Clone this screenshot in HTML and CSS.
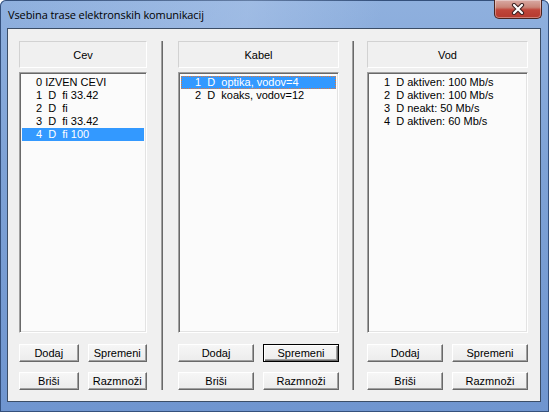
FILE: index.html
```html
<!DOCTYPE html>
<html lang="sl">
<head>
  <meta charset="UTF-8" />
  <title>Vsebina trase elektronskih komunikacij</title>
  <link rel="stylesheet" href="styles.css">
</head>
<body>

  <div class="okno">

    <!-- Naslovna vrstica -->
    <div class="naslov">
      <span class="naslov-tekst">Vsebina trase elektronskih komunikacij</span>
      <div class="zapri">
        <svg width="16" height="12" viewBox="0 0 16 12">
          <path d="M4 2 L12 10 M12 2 L4 10" stroke="#3a2020" stroke-width="4.2" stroke-linecap="round" fill="none"/>
          <path d="M4 2 L12 10 M12 2 L4 10" stroke="#fff" stroke-width="2.2" stroke-linecap="round" fill="none"/>
        </svg>
      </div>
    </div>

    <div class="vsebina">

      <!-- Cev -->
      <div class="stolpec ozek">
        <div class="glava">Cev</div>
        <div class="seznam">
          <div class="vrstica">0 IZVEN CEVI</div>
          <div class="vrstica">1  D  fi 33.42</div>
          <div class="vrstica">2  D  fi</div>
          <div class="vrstica">3  D  fi 33.42</div>
          <div class="vrstica izbrana">4  D  fi 100</div>
        </div>
        <div class="gumbi">
          <button class="gumb">Dodaj</button>
          <button class="gumb">Spremeni</button>
          <button class="gumb">Briši</button>
          <button class="gumb">Razmnoži</button>
        </div>
      </div>

      <div class="locilo"></div>

      <!-- Kabel -->
      <div class="stolpec">
        <div class="glava">Kabel</div>
        <div class="seznam">
          <div class="vrstica izbrana fokus">1  D  optika, vodov=4</div>
          <div class="vrstica">2  D  koaks, vodov=12</div>
        </div>
        <div class="gumbi">
          <button class="gumb">Dodaj</button>
          <button class="gumb privzet">Spremeni</button>
          <button class="gumb">Briši</button>
          <button class="gumb">Razmnoži</button>
        </div>
      </div>

      <div class="locilo"></div>

      <!-- Vod -->
      <div class="stolpec">
        <div class="glava">Vod</div>
        <div class="seznam">
          <div class="vrstica">1  D aktiven: 100 Mb/s</div>
          <div class="vrstica">2  D aktiven: 100 Mb/s</div>
          <div class="vrstica">3  D neakt: 50 Mb/s</div>
          <div class="vrstica">4  D aktiven: 60 Mb/s</div>
        </div>
        <div class="gumbi">
          <button class="gumb">Dodaj</button>
          <button class="gumb">Spremeni</button>
          <button class="gumb">Briši</button>
          <button class="gumb">Razmnoži</button>
        </div>
      </div>

    </div>
  </div>

</body>
</html>
```

FILE: styles.css
```css
body {
  margin: 0;
  padding: 0;
  background: #ffffff;
}

.okno {
  width: 549px;
  height: 412px;
  box-sizing: border-box;
  padding: 0 8px 10px 7px;
  border-radius: 6px 6px 0 0;
  background: linear-gradient(to bottom, #8fb0de 0%, #7ea2d6 40%, #6f95cf 100%);
  box-shadow: inset 0 0 0 1px #34507c;
}

.naslov {
  position: relative;
  height: 28px;
  display: flex;
  align-items: center;
  background: linear-gradient(100deg, rgba(255,255,255,0) 0%, rgba(190,210,240,0.35) 45%, rgba(255,255,255,0) 70%);
}

.naslov-tekst {
  position: relative;
  margin-left: 1px;
  margin-top: 1px;
  font-family: "Open Sans", "Noto Sans", sans-serif;
  font-size: 11px;
  letter-spacing: -0.1px;
  color: #000;
}

.naslov-tekst::before {
  content: "";
  position: absolute;
  left: -6px;
  right: -10px;
  top: -2px;
  bottom: -2px;
  border-radius: 10px;
  background: rgba(235, 242, 252, 0.75);
  filter: blur(6px);
  z-index: -1;
}

.zapri {
  position: absolute;
  right: -1px;
  top: 0;
  width: 48px;
  height: 19px;
  box-sizing: border-box;
  border: 1px solid #4a2420;
  border-top: none;
  border-radius: 0 0 5px 5px;
  background: linear-gradient(to bottom, #d9aaa4 0%, #c98578 40%, #c0453a 55%, #b53a2e 100%);
  box-shadow: inset 0 0 0 1px rgba(255,255,255,0.35);
  display: flex;
  align-items: center;
  justify-content: center;
}

.vsebina {
  height: 374px;
  box-sizing: border-box;
  border: 1px solid #3b4d66;
  background: #f0f0f0;
  display: flex;
  padding: 12px 12px 11px 11px;
}

.stolpec {
  width: 161px;
  display: flex;
  flex-direction: column;
}

.stolpec.ozek {
  width: 128px;
}

.locilo {
  width: 1px;
  border-left: 1px solid #a0a0a0;
  background: #696969;
  margin: 0 13px;
}

.ozek + .locilo {
  margin: 0 15px 0 14px;
}

.glava {
  height: 27px;
  box-sizing: border-box;
  border: 1px solid;
  border-color: #d2d2d2 #ffffff #ffffff #d2d2d2;
  display: flex;
  align-items: center;
  justify-content: center;
  font-family: "Liberation Sans", Arial, sans-serif;
  font-size: 11px;
  color: #000;
}

.seznam {
  margin-top: 4px;
  height: 261px;
  box-sizing: border-box;
  border: 1px solid;
  border-color: #a0a0a0 #ffffff #ffffff #a0a0a0;
  box-shadow: inset 1px 1px 0 #696969, inset -1px -1px 0 #e3e3e3;
  background: #fbfbfb;
  padding: 3px 2px 0 2px;
}

.vrstica {
  height: 13px;
  line-height: 13px;
  padding-left: 14px;
  white-space: pre;
  font-family: "Liberation Sans", Arial, sans-serif;
  font-size: 11px;
  color: #000;
}

.vrstica.izbrana {
  background: #3399ff;
  color: #fff;
}

.vrstica.fokus {
  outline: 1px dotted #e07a3c;
  outline-offset: -1px;
}

.gumbi {
  margin-top: 11px;
  display: grid;
  grid-template-columns: 1fr 1fr;
  column-gap: 9px;
  row-gap: 10px;
}

.gumb {
  height: 18px;
  padding: 0;
  box-sizing: border-box;
  border: 1px solid;
  border-color: #ffffff #696969 #696969 #ffffff;
  box-shadow: inset -1px -1px 0 #a0a0a0;
  background: linear-gradient(to bottom, #f6f6f6, #ececec);
  font-family: "Liberation Sans", Arial, sans-serif;
  font-size: 11px;
  color: #000;
}

.gumb.privzet {
  border: 1px solid #000;
  box-shadow: inset 1px 1px 0 #ffffff, inset -1px -1px 0 #696969, inset -2px -2px 0 #a0a0a0;
}
```
